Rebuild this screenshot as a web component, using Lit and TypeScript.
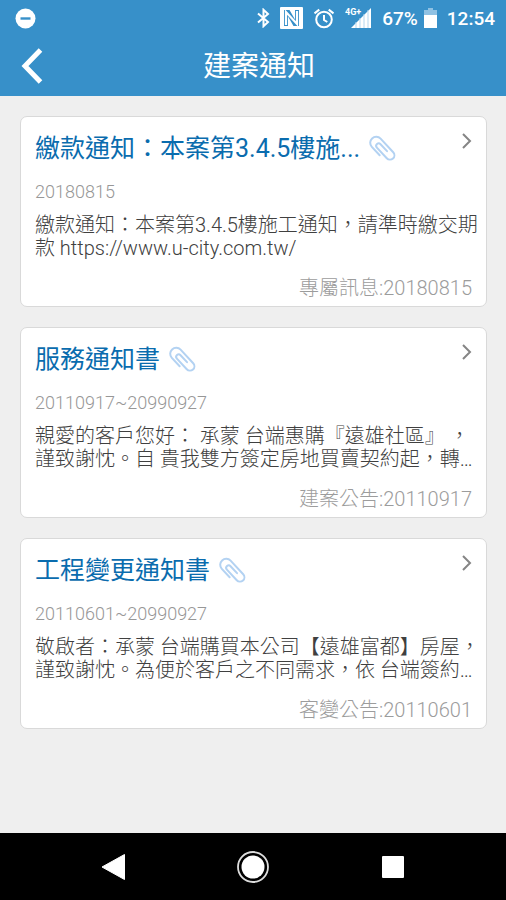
import { LitElement, html, css } from "lit";
import { customElement, property } from "lit/decorators.js";

interface Notice {
  title: string;
  period: string;
  body: string;
  source: string;
}

const NOTICES: Notice[] = [
  {
    title: "繳款通知：本案第3.4.5樓施...",
    period: "20180815",
    body: "繳款通知：本案第3.4.5樓施工通知，請準時繳交期款 https://www.u-city.com.tw/",
    source: "專屬訊息:20180815",
  },
  {
    title: "服務通知書",
    period: "20110917~20990927",
    body: "親愛的客戶您好： 承蒙 台端惠購『遠雄社區』 ，\n謹致謝忱。自 貴我雙方簽定房地買賣契約起，轉…",
    source: "建案公告:20110917",
  },
  {
    title: "工程變更通知書",
    period: "20110601~20990927",
    body: "敬啟者：承蒙 台端購買本公司【遠雄富都】房屋，\n謹致謝忱。為便於客戶之不同需求，依 台端簽約…",
    source: "客變公告:20110601",
  },
];

@customElement("status-bar")
export class StatusBar extends LitElement {
  static styles = css`
    :host {
      display: flex;
      align-items: center;
      height: 36px;
      padding: 0 11px 0 15px;
      color: #fff;
      font-size: 19px;
      font-weight: 500;
    }
    svg {
      display: block;
      flex: none;
    }
    .icons {
      display: flex;
      align-items: center;
      gap: 10px;
      margin-left: auto;
    }
    .power {
      display: flex;
      align-items: center;
      gap: 6px;
    }
  `;

  render() {
    return html`
      <svg width="21" height="21" viewBox="0 0 21 21" role="img" aria-label="勿擾">
        <circle cx="10.5" cy="10.5" r="10" fill="#fff" />
        <rect x="5.5" y="9.3" width="10" height="2.4" fill="#3790c9" />
      </svg>
      <div class="icons">
        <svg width="13" height="20" viewBox="0 0 13 20" fill="none" stroke="#fff" stroke-width="2">
          <path d="M1 5.5 11 14 6.5 18.2V1.8L11 6 1 14.5" />
        </svg>
        <svg width="23" height="22" viewBox="0 0 23 22">
          <rect width="23" height="22" rx="1" fill="#fff" />
          <path d="M4 3H9.500L15 12.500V3H19V19H13.500L8 9.500V19H4Z" fill="#3790c9" />
          <path d="M6 18V5L17 17V4" fill="none" stroke="#fff" stroke-width="2.200" />
        </svg>
        <svg width="22" height="21" viewBox="0 0 22 21" fill="none" stroke="#fff" stroke-width="2">
          <circle cx="11" cy="11.5" r="7.8" />
          <path d="M11 7V12L14.3 14M1.500 5.400 6.300 1.600M20.500 5.400 15.700 1.600" />
        </svg>
        <svg width="27" height="22" viewBox="0 0 27 22">
          <text x="0" y="8" font-size="9" font-weight="700" fill="#fff">4G+</text>
          <path d="M6 21 26 1V21Z" fill="#fff" />
          <path d="M11 15V21M15 11V21M19 7V21M23 3V21" stroke="#b5d7ee" stroke-width="1" />
        </svg>
        <div class="power">
          <span>67%</span>
          <svg width="13" height="20" viewBox="0 0 13 20">
            <path d="M4 0H9V2H13V7H0V2H4Z" fill="#8fc1e3" />
            <path d="M0 7H13V20H0Z" fill="#fff" />
          </svg>
        </div>
        <span>12:54</span>
      </div>
    `;
  }
}

@customElement("notice-card")
export class NoticeCard extends LitElement {
  @property({ attribute: false }) notice!: Notice;

  static styles = css`
    :host {
      display: block;
    }
    .card {
      display: block;
      padding: 13px 14px 6px;
      border: 1px solid #d9d9d9;
      border-radius: 7px;
      background: #fff;
      color: inherit;
      text-decoration: none;
      font-weight: 300;
    }
    .head {
      display: flex;
      align-items: flex-start;
      gap: 8px;
    }
    .title {
      margin: 0;
      color: #0a6cae;
      font-size: 25px;
      font-weight: 400;
      line-height: 38px;
      white-space: nowrap;
    }
    .clip {
      flex: none;
      margin-top: 5px;
    }
    .chevron {
      flex: none;
      margin: 2px 0 0 auto;
    }
    .period {
      margin: 12px 0 0;
      color: #979797;
      font-size: 18px;
      line-height: 24px;
    }
    .body {
      margin: 10px -10px 0 0;
      color: #404040;
      font-size: 20px;
      line-height: 23px;
      white-space: pre-line;
      text-spacing-trim: space-all;
    }
    .source {
      margin: 16px 0 0;
      color: #9c9c9c;
      font-size: 20px;
      line-height: 24px;
      text-align: right;
    }
  `;

  render() {
    const n = this.notice;
    return html`
      <a class="card" href="#">
        <div class="head">
          <h2 class="title">${n.title}</h2>
          <svg class="clip" width="28" height="28" viewBox="-14 -14 28 28" fill="none" stroke="#b3d2f2" stroke-width="2" stroke-linecap="round" role="img" aria-label="附件">
            <path transform="rotate(-43)" d="M-6 3V-8.500A6 6 0 0 1 6 -8.500V10A4.400 4.400 0 0 1 -2.800 10V-4.500A2.500 2.500 0 0 1 2.200 -4.500V5" />
          </svg>
          <svg class="chevron" width="12" height="18" viewBox="0 0 12 18" fill="none" stroke="#858585" stroke-width="2">
            <path d="M3 2 10 9 3 16" />
          </svg>
        </div>
        <p class="period">${n.period}</p>
        <p class="body">${n.body}</p>
        <p class="source">${n.source}</p>
      </a>
    `;
  }
}

@customElement("app-root")
export class AppRoot extends LitElement {
  static styles = css`
    :host {
      display: flex;
      flex-direction: column;
      min-height: 100vh;
      background: #efefef;
      font-family: Roboto, "Noto Sans CJK TC", sans-serif;
    }
    .top {
      background: #3790c9;
      color: #fff;
    }
    .bar {
      display: grid;
      grid-template-columns: 60px 1fr 48px;
      align-items: center;
      height: 60px;
    }
    .heading {
      margin: 0;
      padding-top: 2px;
      font-size: 28px;
      font-weight: 400;
      line-height: 40px;
      text-align: center;
    }
    button {
      display: grid;
      place-items: center;
      padding: 0;
      border: 0;
      background: none;
    }
    .back {
      height: 60px;
      padding-left: 4px;
    }
    .list {
      display: flex;
      flex: 1;
      flex-direction: column;
      gap: 20px;
      padding: 20px 19px 20px 20px;
    }
    .nav {
      display: flex;
      justify-content: center;
      align-items: center;
      gap: 100px;
      height: 67px;
      background: #000;
    }
    .nav button {
      width: 40px;
      height: 40px;
    }
  `;

  render() {
    return html`
      <header class="top">
        <status-bar></status-bar>
        <div class="bar">
          <button class="back" aria-label="返回">
            <svg width="22" height="36" viewBox="0 0 22 36" fill="none" stroke="#fff" stroke-width="5">
              <path d="M19.500 2 4 18 19.500 34" />
            </svg>
          </button>
          <h1 class="heading">建案通知</h1>
        </div>
      </header>
      <main class="list">
        ${NOTICES.map((n) => html`<notice-card .notice=${n}></notice-card>`)}
      </main>
      <nav class="nav">
        <button aria-label="上一頁">
          <svg width="26" height="28" viewBox="0 0 26 28"><path d="M2 14 24.500 1.500V26.500Z" fill="#fff" stroke="#fff" stroke-linejoin="round" /></svg>
        </button>
        <button aria-label="主畫面">
          <svg width="32" height="32" viewBox="0 0 32 32">
            <circle cx="16" cy="16" r="15" fill="none" stroke="#ddd" stroke-width="1.8" />
            <circle cx="16" cy="16" r="11.5" fill="#fff" />
          </svg>
        </button>
        <button aria-label="最近使用">
          <svg width="22" height="22" viewBox="0 0 22 22"><rect width="22" height="22" rx="1" fill="#fff" /></svg>
        </button>
      </nav>
    `;
  }
}
